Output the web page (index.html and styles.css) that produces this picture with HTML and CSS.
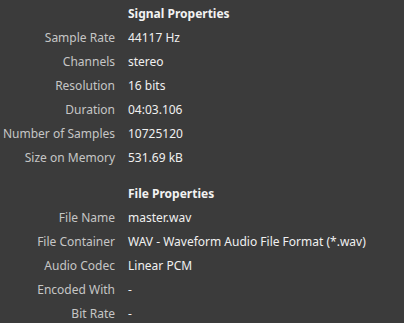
FILE: index.html
```html
<!DOCTYPE html>
<html>
<head>
  <meta charset="utf-8">
  <title>Properties</title>
  <link rel="stylesheet" href="styles.css">
</head>
<body>
  <div class="props">
    <div class="section">
      <span></span><b class="head">Signal Properties</b>
      <span class="key">Sample Rate</span><span class="val">44117 Hz</span>
      <span class="key">Channels</span><span class="val">stereo</span>
      <span class="key">Resolution</span><span class="val">16 bits</span>
      <span class="key">Duration</span><span class="val">04:03.106</span>
      <span class="key">Number of Samples</span><span class="val">10725120</span>
      <span class="key">Size on Memory</span><span class="val">531.69 kB</span>
    </div>
    <div class="section">
      <span></span><b class="head">File Properties</b>
      <span class="key">File Name</span><span class="val">master.wav</span>
      <span class="key">File Container</span><span class="val">WAV - Waveform Audio File Format (*.wav)</span>
      <span class="key">Audio Codec</span><span class="val">Linear PCM</span>
      <span class="key">Encoded With</span><span class="val">-</span>
      <span class="key">Bit Rate</span><span class="val">-</span>
    </div>
  </div>
</body>
</html>
```

FILE: styles.css
```css
* { box-sizing: border-box; }
body {
    margin: 0;
    padding: 0;
    background-color: #3b3b3b;
    font-family: "Noto Sans", "Open Sans", sans-serif;
    font-size: 12px;
    overflow: hidden;
}
.props {
    padding-top: 1px;
    display: flex;
    flex-direction: column;
    gap: 12px;
}
.section {
    display: grid;
    grid-template-columns: 115px 1fr;
    grid-auto-rows: 24px;
    column-gap: 13px;
    align-items: center;
}
.head {
    color: #f2f2f2;
    font-weight: bold;
}
.key {
    color: #c6c6c6;
    text-align: right;
    white-space: nowrap;
}
.val {
    color: #f0f0f0;
    white-space: nowrap;
}
```
